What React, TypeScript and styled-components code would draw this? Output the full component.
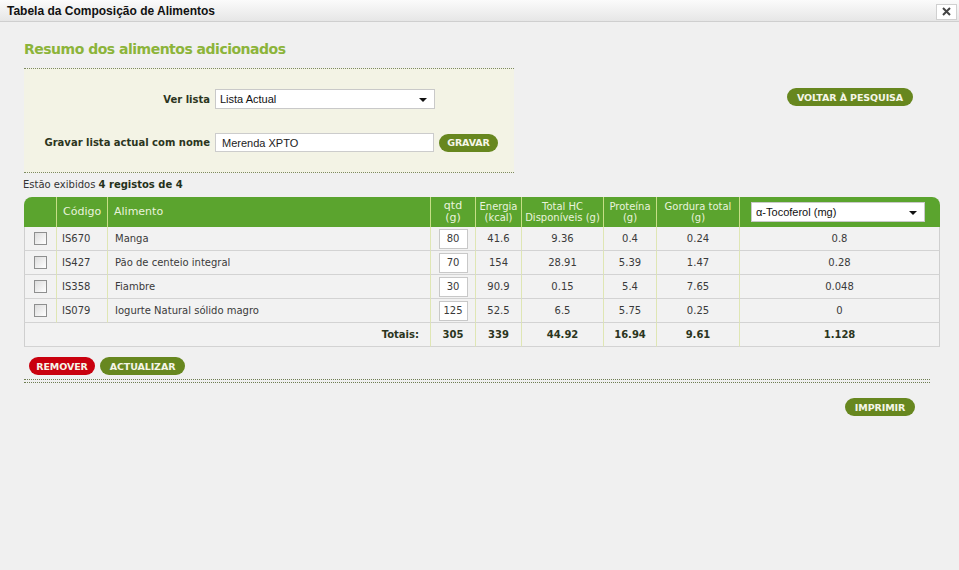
import React from "react";
import styled, { createGlobalStyle } from "styled-components";

const GlobalStyle = createGlobalStyle`
  html, body { margin: 0; padding: 0; }
  body {
    background: #f0f0f0;
    font-family: "DejaVu Sans", Verdana, sans-serif;
    font-size: 10px;
    color: #3a3a3a;
    width: 959px;
    height: 570px;
    overflow: hidden;
  }
`;

const Window = styled.div`
  width: 959px;
  height: 570px;
  display: flex;
  flex-direction: column;
`;

const TitleBar = styled.div`
  height: 21px;
  display: flex;
  align-items: center;
  padding: 0 2px 0 7px;
  background: linear-gradient(#fbfbfb, #e6e6e6);
  border-bottom: 1px solid #cfcfcf;
`;

const Title = styled.div`
  font-family: "Liberation Sans", Arial, sans-serif;
  font-weight: bold;
  font-size: 12px;
  color: #111;
  flex: 1;
`;

const CloseBtn = styled.div`
  width: 19px;
  height: 14px;
  margin-top: 2px;
  background: #fff;
  border: 1px solid #d0d0d0;
  display: flex;
  align-items: center;
  justify-content: center;
`;

const Content = styled.div`
  padding: 0 19px 0 24px;
  display: flex;
  flex-direction: column;
`;

const Heading = styled.h1`
  margin: 18px 0 0 0;
  font-size: 14px;
  letter-spacing: -0.5px;
  line-height: 18px;
  font-weight: bold;
  color: #8cb43a;
  height: 28px;
`;

const TopRow = styled.div`
  display: flex;
  justify-content: space-between;
  align-items: flex-start;
  padding-right: 27px;
`;

const FormPanel = styled.div`
  width: 490px;
  background: #f3f3e5;
  border-top: 1px dotted #7d8a63;
  border-bottom: 1px dotted #7d8a63;
  padding: 20px 0 20px 0;
  display: grid;
  grid-template-columns: 186px auto;
  column-gap: 5px;
  row-gap: 24px;
  align-items: center;
`;

const Label = styled.label`
  text-align: right;
  font-weight: bold;
  font-size: 10px;
  color: #2b3520;
`;

const FieldRow = styled.div`
  display: flex;
  align-items: center;
  gap: 5px;
`;

const SelectBox = styled.div<{ $w: number; $h: number }>`
  width: ${(p) => p.$w}px;
  height: ${(p) => p.$h}px;
  box-sizing: border-box;
  background: #fff;
  border: 1px solid #c9c9c9;
  display: flex;
  align-items: center;
  justify-content: space-between;
  padding: 0 7px 0 4px;
  font-family: "Liberation Sans", Arial, sans-serif;
  font-size: 11px;
  color: #111;
`;

const Arrow = styled.span`
  width: 0;
  height: 0;
  border-left: 4px solid transparent;
  border-right: 4px solid transparent;
  border-top: 4px solid #111;
  margin-top: 2px;
`;

const TextInput = styled.div`
  width: 219px;
  height: 19px;
  box-sizing: border-box;
  background: #fff;
  border: 1px solid #cccccc;
  padding: 0 6px;
  display: flex;
  align-items: center;
  font-family: "Liberation Sans", Arial, sans-serif;
  font-size: 11px;
  color: #222;
`;

const Pill = styled.button<{ $red?: boolean; $w: number }>`
  width: ${(p) => p.$w}px;
  height: 18px;
  border: none;
  border-radius: 9px;
  padding: 0;
  background: ${(p) => (p.$red ? "#c9000e" : "#67871f")};
  color: #f6f6e8;
  font-family: "DejaVu Sans", Verdana, sans-serif;
  font-weight: bold;
  font-size: 9.5px;
  letter-spacing: -0.1px;
  cursor: pointer;
`;

const RightPill = styled(Pill)`
  margin-top: 20px;
`;

const Count = styled.div`
  margin: 5px 0 0 -1px;
  height: 19px;
  line-height: 14px;
  font-size: 10px;
  color: #333;
  b { color: #24301a; }
`;

const Table = styled.table`
  width: 916px;
  table-layout: fixed;
  border-collapse: separate;
  border-spacing: 0;
  margin-top: 0;
`;

const HeadCell = styled.th<{ $align?: string; $first?: boolean; $last?: boolean; $big?: boolean }>`
  background: #5ba42e;
  color: #e9f3dc;
  font-weight: normal;
  font-size: ${(p) => (p.$big ? "11px" : "10px")};
  line-height: ${(p) => (p.$big ? "12px" : "11px")};
  height: 30px;
  box-sizing: border-box;
  padding: ${(p) => (p.$align === "left" ? "0 0 0 6px" : "0 2px")};
  text-align: ${(p) => p.$align || "center"};
  border-left: ${(p) => (p.$first ? "none" : "1px solid #c7df86")};
  border-top-left-radius: ${(p) => (p.$first ? "8px" : "0")};
  border-top-right-radius: ${(p) => (p.$last ? "8px" : "0")};
`;

const Cell = styled.td<{ $align?: string; $first?: boolean; $last?: boolean; $bold?: boolean; $pl?: number; $pr?: number }>`
  height: 24px;
  box-sizing: border-box;
  padding: 0 ${(p) => p.$pr ?? 0}px 0 ${(p) => p.$pl ?? 0}px;
  text-align: ${(p) => p.$align || "center"};
  font-size: 10px;
  font-weight: ${(p) => (p.$bold ? "bold" : "normal")};
  color: ${(p) => (p.$bold ? "#2b3520" : "#3a3a3a")};
  background: #f2f2f2;
  border-bottom: 1px solid #d3d3d3;
  border-left: ${(p) => (p.$first ? "1px solid #cfcfcf" : "1px solid #dfe6b4")};
  border-right: ${(p) => (p.$last ? "1px solid #cfcfcf" : "none")};
  white-space: nowrap;
`;

const Check = styled.span`
  display: inline-block;
  width: 11px;
  height: 11px;
  border: 1px solid #8e8f8f;
  background: linear-gradient(135deg, #dcdcdc, #ffffff);
  vertical-align: middle;
`;

const QtyBox = styled.span`
  display: inline-block;
  width: 29px;
  height: 20px;
  box-sizing: border-box;
  background: #fff;
  border: 1px solid #c8c8c8;
  text-align: center;
  line-height: 18px;
  vertical-align: middle;
`;

const ActionRow = styled.div`
  display: flex;
  gap: 5px;
  margin: 10px 0 0 5px;
`;

const DoubleDots = styled.div`
  width: 906px;
  height: 2px;
  margin-top: 4px;
  border-top: 1px dotted #6e7d52;
  border-bottom: 1px dotted #6e7d52;
`;

const PrintRow = styled.div`
  display: flex;
  justify-content: flex-end;
  padding-right: 25px;
  margin-top: 15px;
`;

type Row = { code: string; name: string; qtd: string; vals: string[] };

const rows: Row[] = [
  { code: "IS670", name: "Manga", qtd: "80", vals: ["41.6", "9.36", "0.4", "0.24", "0.8"] },
  { code: "IS427", name: "Pão de centeio integral", qtd: "70", vals: ["154", "28.91", "5.39", "1.47", "0.28"] },
  { code: "IS358", name: "Fiambre", qtd: "30", vals: ["90.9", "0.15", "5.4", "7.65", "0.048"] },
  { code: "IS079", name: "Iogurte Natural sólido magro", qtd: "125", vals: ["52.5", "6.5", "5.75", "0.25", "0"] },
];

const widths = [32, 51, 323, 45, 46, 82, 53, 83, 201];

export default function App() {
  return (
    <Window>
      <GlobalStyle />
      <TitleBar>
        <Title>Tabela da Composição de Alimentos</Title>
        <CloseBtn>
          <svg width="9" height="9" viewBox="0 0 9 9">
            <path d="M1 1 L8 8 M8 1 L1 8" stroke="#444" strokeWidth="2" />
          </svg>
        </CloseBtn>
      </TitleBar>
      <Content>
        <Heading>Resumo dos alimentos adicionados</Heading>
        <TopRow>
          <FormPanel>
            <Label>Ver lista</Label>
            <SelectBox $w={220} $h={20}>
              Lista Actual
              <Arrow />
            </SelectBox>
            <Label>Gravar lista actual com nome</Label>
            <FieldRow>
              <TextInput>Merenda XPTO</TextInput>
              <Pill $w={59}>GRAVAR</Pill>
            </FieldRow>
          </FormPanel>
          <RightPill $w={126}>VOLTAR À PESQUISA</RightPill>
        </TopRow>
        <Count>
          Estão exibidos <b>4 registos de 4</b>
        </Count>
        <Table>
          <colgroup>
            {widths.map((w, i) => (
              <col key={i} style={{ width: w }} />
            ))}
          </colgroup>
          <thead>
            <tr>
              <HeadCell $first />
              <HeadCell $align="left" $big>Código</HeadCell>
              <HeadCell $align="left" $big>Alimento</HeadCell>
              <HeadCell $big>qtd<br />(g)</HeadCell>
              <HeadCell>Energia<br />(kcal)</HeadCell>
              <HeadCell>Total HC<br />Disponíveis (g)</HeadCell>
              <HeadCell>Proteína<br />(g)</HeadCell>
              <HeadCell>Gordura total<br />(g)</HeadCell>
              <HeadCell $last>
                <SelectBox $w={174} $h={20} style={{ margin: "0 0 0 9px" }}>
                  α-Tocoferol (mg)
                  <Arrow />
                </SelectBox>
              </HeadCell>
            </tr>
          </thead>
          <tbody>
            {rows.map((r) => (
              <tr key={r.code}>
                <Cell $first>
                  <Check />
                </Cell>
                <Cell $align="left" $pl={5}>{r.code}</Cell>
                <Cell $align="left" $pl={7}>{r.name}</Cell>
                <Cell>
                  <QtyBox>{r.qtd}</QtyBox>
                </Cell>
                {r.vals.map((v, i) => (
                  <Cell key={i} $last={i === r.vals.length - 1}>{v}</Cell>
                ))}
              </tr>
            ))}
            <tr>
              <Cell $first colSpan={3} $align="right" $pr={11} $bold>Totais:</Cell>
              <Cell $bold>305</Cell>
              <Cell $bold>339</Cell>
              <Cell $bold>44.92</Cell>
              <Cell $bold>16.94</Cell>
              <Cell $bold>9.61</Cell>
              <Cell $bold $last>1.128</Cell>
            </tr>
          </tbody>
        </Table>
        <ActionRow>
          <Pill $red $w={66}>REMOVER</Pill>
          <Pill $w={85}>ACTUALIZAR</Pill>
        </ActionRow>
        <DoubleDots />
        <PrintRow>
          <Pill $w={70}>IMPRIMIR</Pill>
        </PrintRow>
      </Content>
    </Window>
  );
}
